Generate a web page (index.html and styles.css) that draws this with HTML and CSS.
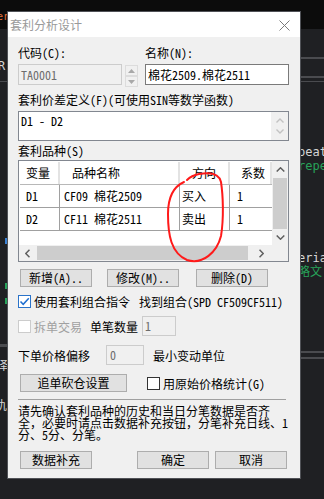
FILE: index.html
```html
<!DOCTYPE html>
<html lang="zh-CN">
<head>
    <meta charset="UTF-8">
    <meta name="viewport" content="width=device-width, initial-scale=1.0">
    <title>套利分析设计</title>
    <link rel="stylesheet" href="styles.css">
</head>
<body>
    <div class="desktop">
        <div class="editor-top"></div>

        <!-- editor text showing behind the dialog -->
        <span class="frag frag-er">er</span>
        <span class="frag frag-r">R</span>
        <span class="frag frag-peat">peat</span>
        <span class="frag frag-repe">repe</span>
        <span class="frag frag-eria">eria</span>
        <span class="frag frag-lue">略文</span>
        <span class="frag frag-yi">译</span>
        <span class="frag frag-qiu">犰</span>
        <span class="mark mark-blue"></span>
        <span class="mark mark-green1"></span>
        <span class="mark mark-green2"></span>
        <span class="rule rule-r1"></span>
        <span class="rule rule-r2"></span>
        <span class="rule rule-r3"></span>
        <span class="rule rule-l1"></span>
        <span class="rule rule-r4"></span>
        <span class="rule rule-r5"></span>
        <span class="rule rule-l2"></span>

        <div class="dialog">
            <div class="titlebar">
                <span class="title">套利分析设计</span>
                <svg class="close" width="11" height="11" viewBox="0 0 11 11">
                    <path d="M0.5 0.5 L10.5 10.5 M10.5 0.5 L0.5 10.5" stroke="#7a7a7a" stroke-width="1" fill="none"/>
                </svg>
            </div>

            <div class="content">
                <!-- code and name -->
                <div class="two-col">
                    <div class="label">代码(C):</div>
                    <div class="label">名称(N):</div>
                    <div class="code-field">
                        <div class="input input-disabled code-input">TA0001</div>
                        <div class="spin">
                            <div class="spin-btn">
                                <svg width="7" height="4" viewBox="0 0 7 4"><path d="M0 4 L3.5 0 L7 4 Z" fill="#a8a8a8"/></svg>
                            </div>
                            <div class="spin-btn">
                                <svg width="7" height="4" viewBox="0 0 7 4"><path d="M0 0 L3.5 4 L7 0 Z" fill="#a8a8a8"/></svg>
                            </div>
                        </div>
                    </div>
                    <div class="input name-input">棉花2509.棉花2511</div>
                </div>

                <!-- spread formula -->
                <div class="label label-formula">套利价差定义(F)(可使用SIN等数学函数)</div>
                <div class="textarea">
                    <div class="textarea-text">D1 - D2</div>
                    <div class="textarea-scroll">
                        <svg width="8" height="5" viewBox="0 0 8 5"><path d="M0.5 4.5 L4 1 L7.5 4.5" stroke="#c2c2c2" stroke-width="1.4" fill="none"/></svg>
                        <svg width="8" height="5" viewBox="0 0 8 5"><path d="M0.5 0.5 L4 4 L7.5 0.5" stroke="#c2c2c2" stroke-width="1.4" fill="none"/></svg>
                    </div>
                </div>

                <!-- legs list -->
                <div class="label label-legs">套利品种(S)</div>
                <div class="listbox">
                    <div class="list-area">
                        <div class="list-row list-head">
                            <div class="cell c1 h1">变量</div>
                            <div class="cell c2 h2">品种名称</div>
                            <div class="cell c3 h3">方向</div>
                            <div class="cell c4 h4">系数</div>
                        </div>
                        <div class="list-row">
                            <div class="cell c1">D1</div>
                            <div class="cell c2">CF09 棉花2509</div>
                            <div class="cell c3">买入</div>
                            <div class="cell c4">1</div>
                        </div>
                        <div class="list-row">
                            <div class="cell c1">D2</div>
                            <div class="cell c2">CF11 棉花2511</div>
                            <div class="cell c3">卖出</div>
                            <div class="cell c4">1</div>
                        </div>
                    </div>
                    <div class="vscroll">
                        <div class="arrow-btn">
                            <svg width="9" height="5" viewBox="0 0 9 5"><path d="M0.7 4.5 L4.5 0.8 L8.3 4.5" stroke="#606060" stroke-width="1.5" fill="none"/></svg>
                        </div>
                        <div class="vthumb"></div>
                        <div class="arrow-btn arrow-down">
                            <svg width="9" height="5" viewBox="0 0 9 5"><path d="M0.7 0.5 L4.5 4.2 L8.3 0.5" stroke="#606060" stroke-width="1.5" fill="none"/></svg>
                        </div>
                    </div>
                    <div class="hscroll">
                        <div class="arrow-btn arrow-h">
                            <svg width="5" height="9" viewBox="0 0 5 9"><path d="M4.5 0.7 L0.8 4.5 L4.5 8.3" stroke="#606060" stroke-width="1.5" fill="none"/></svg>
                        </div>
                        <div class="hthumb"></div>
                        <div class="arrow-btn arrow-h arrow-right">
                            <svg width="5" height="9" viewBox="0 0 5 9"><path d="M0.5 0.7 L4.2 4.5 L0.5 8.3" stroke="#606060" stroke-width="1.5" fill="none"/></svg>
                        </div>
                    </div>
                    <div class="corner"></div>

                    <!-- red hand-drawn mark over the direction column -->
                    <svg class="scribble" width="324" height="499" viewBox="0 0 324 499">
                        <path d="M184 179 C175 183 168 193 168 211 C168 232 171 250 187 257 C203 262 217 249 221 233 C224 215 223 192 221 179 C219 170 210 169 199 171 C194 172 190 174 187 177" stroke="#ff1a1a" stroke-width="2" fill="none" stroke-linecap="round"/>
                    </svg>
                </div>

                <!-- list buttons -->
                <div class="button-row">
                    <div class="btn btn-add">新增(A)..</div>
                    <div class="btn btn-edit">修改(M)..</div>
                    <div class="btn btn-del">删除(D)</div>
                </div>

                <div class="check-row">
                    <span class="checkbox checkbox-on">
                        <svg width="11" height="11" viewBox="0 0 11 11"><path d="M1.5 5.5 L4.2 8.3 L9.8 2.2" stroke="#1f6fd0" stroke-width="1.5" fill="none"/></svg>
                    </span>
                    <span class="check-text">使用套利组合指令</span>
                    <span class="found-text">找到组合(SPD CF509CF511)</span>
                </div>

                <div class="split-row">
                    <span class="checkbox checkbox-off"></span>
                    <span class="check-text muted">拆单交易</span>
                    <span class="qty-label">单笔数量</span>
                    <div class="input input-disabled qty-input">1</div>
                </div>

                <div class="offset-row">
                    <span class="offset-label">下单价格偏移</span>
                    <div class="input input-disabled offset-input">0</div>
                    <span class="tick-label">最小变动单位</span>
                </div>

                <div class="chase-row">
                    <div class="btn btn-chase">追单砍仓设置</div>
                    <span class="checkbox checkbox-plain"></span>
                    <span class="check-text">用原始价格统计(G)</span>
                </div>

                <div class="separator"></div>

                <div class="note">请先确认套利品种的历史和当日分笔数据是否齐<br>全，必要时请点击数据补充按钮，分笔补充日线、1<br>分、5分、分笔。</div>

                <div class="footer">
                    <div class="btn">数据补充</div>
                    <div class="footer-right">
                        <div class="btn">确定</div>
                        <div class="btn">取消</div>
                    </div>
                </div>
            </div>
        </div>
    </div>
</body>
</html>
```

FILE: styles.css
```css
body {
    margin: 0;
    background-color: #1f2023;
    font-family: "Noto Sans Mono CJK SC", "Noto Sans CJK SC", sans-serif;
    font-size: 12px;
    color: #000;
}

.desktop {
    position: relative;
    width: 324px;
    height: 499px;
    overflow: hidden;
}

/* Editor behind the dialog */
.editor-top {
    height: 29px;
    background-color: #0c0c0c;
}

.frag {
    position: absolute;
    font-family: "DejaVu Sans Mono", "Noto Sans CJK SC", monospace;
    font-size: 12px;
    line-height: 12px;
    color: #d6d6d6;
    white-space: nowrap;
}

.frag-er { left: -3px; top: 11px; font-size: 10px; color: #e2703a; }
.frag-r { left: -2px; top: 60px; }
.frag-peat { left: 298px; top: 146px; }
.frag-repe { left: 298px; top: 160px; color: #27a35a; }
.frag-eria { left: 298px; top: 252px; }
.frag-lue { left: 298px; top: 266px; color: #27a35a; }
.frag-yi { left: -4px; top: 360px; }
.frag-qiu { left: -5px; top: 400px; }

.mark {
    position: absolute;
    left: 5px;
    width: 2px;
    height: 6px;
}

.mark-blue { top: 238px; background-color: #3b82d6; }
.mark-green1 { top: 283px; background-color: #27a35a; }
.mark-green2 { top: 298px; background-color: #27a35a; }

.rule {
    position: absolute;
    height: 2px;
    background-color: #4a4b4f;
}

.rule-r1 { left: 300px; width: 24px; top: 57px; }
.rule-r2 { left: 300px; width: 24px; top: 76px; }
.rule-r3 { left: 300px; width: 24px; top: 81px; height: 1px; }
.rule-l1 { left: 0; width: 8px; top: 81px; height: 1px; }
.rule-r4 { left: 300px; width: 24px; top: 351px; }
.rule-r5 { left: 300px; width: 24px; top: 357px; }
.rule-l2 { left: 0; width: 8px; top: 344px; height: 3px; }

/* Dialog window */
.dialog {
    position: absolute;
    left: 7px;
    top: 11px;
    z-index: 2;
    width: 294px;
    height: 468px;
    box-sizing: border-box;
    border: 1px solid #505257;
    background-color: #f0f0f0;
}

.titlebar {
    height: 25px;
    background-color: #fff;
    display: flex;
    align-items: center;
    justify-content: space-between;
    padding: 0 10px 0 2px;
}

.title {
    color: #9a9a9a;
    font-family: "Noto Sans CJK SC", sans-serif;
    font-size: 12px;
}

.close {
    display: block;
    margin-top: 1px;
}

.content {
    padding: 9px 11px 0 10px;
}

.label {
    line-height: 14px;
    height: 14px;
    white-space: nowrap;
}

/* Inputs */
.input {
    box-sizing: border-box;
    height: 21px;
    line-height: 19px;
    border: 1px solid #7a7a7a;
    background-color: #fff;
    padding-left: 2px;
    white-space: nowrap;
}

.input-disabled {
    border-color: #cccccc;
    background-color: #f0f0f0;
    color: #6d6d6d;
}

.two-col {
    display: grid;
    grid-template-columns: 120px 1fr;
    column-gap: 7px;
    row-gap: 4px;
}

.code-field {
    display: flex;
    gap: 3px;
}

.code-input {
    width: 104px;
}

.spin {
    width: 13px;
    display: flex;
    flex-direction: column;
    justify-content: space-between;
    padding: 1px 0;
}

.spin-btn {
    height: 9px;
    border: 1px solid #dcdcdc;
    display: flex;
    align-items: center;
    justify-content: center;
}

.label-formula {
    margin-top: 5px;
}

.textarea {
    margin-top: 4px;
    height: 30px;
    box-sizing: border-box;
    border: 1px solid #828790;
    background-color: #fff;
    display: flex;
}

.textarea-text {
    flex: 1;
    padding: 2px 0 0 2px;
    line-height: 14px;
}

.textarea-scroll {
    width: 17px;
    background-color: #f0f0f0;
    display: flex;
    flex-direction: column;
    align-items: center;
    justify-content: space-between;
    padding: 6px 0 6px;
}

/* Legs list */
.label-legs {
    margin-top: 3px;
}

.listbox {
    position: relative;
    margin-top: 2px;
    height: 102px;
    box-sizing: border-box;
    border: 1px solid #828790;
    background-color: #fff;
    display: grid;
    grid-template-columns: 1fr 16px;
    grid-template-rows: 1fr 16px;
}

.list-area {
    padding: 1px 0 0 1px;
    overflow: hidden;
}

.list-row {
    display: flex;
    height: 22px;
    border-bottom: 1px solid #a0a0a0;
}

.list-head {
    border-bottom-color: #b8b8b8;
}

.cell {
    box-sizing: border-box;
    height: 22px;
    line-height: 22px;
    border-right: 1px solid #a0a0a0;
    white-space: nowrap;
}

.list-head .cell {
    border-right: 2px solid #e3e3e3;
}

.c1 { width: 40px; padding-left: 6px; }
.c2 { width: 120px; padding-left: 4px; }
.c3 { width: 50px; padding-left: 2px; }
.c4 { width: 42px; padding-left: 7px; border-right: none; }

.h2 { padding-left: 12px; }
.h3 { padding-left: 12px; }
.h4 { padding-left: 11px; }

.vscroll {
    background-color: #f0f0f0;
    display: flex;
    flex-direction: column;
}

.arrow-btn {
    height: 17px;
    display: flex;
    align-items: center;
    justify-content: center;
}

.arrow-down {
    margin-top: auto;
    height: 16px;
}

.vthumb {
    height: 51px;
    margin: 0 1px;
    background-color: #cdcdcd;
}

.hscroll {
    background-color: #f0f0f0;
    display: flex;
}

.arrow-h {
    height: 16px;
    width: 17px;
}

.arrow-right {
    margin-left: auto;
    width: 22px;
}

.hthumb {
    width: 211px;
    margin: 1px 0 1px 1px;
    background-color: #cdcdcd;
}

.corner {
    background-color: #f0f0f0;
}

.scribble {
    position: absolute;
    left: -19px;
    top: -158px;
    pointer-events: none;
}

/* Buttons */
.btn {
    box-sizing: border-box;
    height: 18px;
    width: 72px;
    line-height: 16px;
    border: 1px solid #adadad;
    background-color: #e1e1e1;
    text-align: center;
    white-space: nowrap;
}

.button-row {
    margin-top: 7px;
    display: flex;
    padding-left: 2px;
}

.btn-edit { margin-left: 15px; }
.btn-del { margin-left: 17px; }

/* Checkbox rows */
.checkbox {
    box-sizing: border-box;
    width: 13px;
    height: 13px;
    border: 1px solid #333;
    background-color: #fff;
    display: inline-flex;
    align-items: center;
    justify-content: center;
    flex-shrink: 0;
}

.checkbox-on {
    border-color: #2a73c9;
}

.checkbox-off {
    border-color: #cccccc;
}

.check-row,
.split-row,
.offset-row,
.chase-row {
    display: flex;
    align-items: center;
    white-space: nowrap;
}

.check-row {
    margin-top: 7px;
    height: 14px;
}

.check-text {
    margin-left: 3px;
}

.muted {
    color: #a0a0a0;
}

.found-text {
    margin-left: 9px;
}

.split-row {
    margin-top: 8px;
    height: 20px;
}

.qty-label {
    margin-left: 8px;
}

.qty-input {
    margin-left: 4px;
    width: 34px;
    height: 20px;
    line-height: 18px;
}

.offset-row {
    margin-top: 9px;
    height: 20px;
}

.offset-input {
    margin-left: 16px;
    width: 38px;
    height: 20px;
    line-height: 18px;
    padding-left: 3px;
}

.tick-label {
    margin-left: 9px;
}

.chase-row {
    margin-top: 9px;
    height: 18px;
    padding-left: 2px;
}

.btn-chase {
    width: 107px;
}

.checkbox-plain {
    margin-left: 20px;
}

.separator {
    margin-top: 7px;
    height: 1px;
    margin-right: 3px;
    background-color: #a0a0a0;
}

.note {
    margin-top: 5px;
    line-height: 12px;
    white-space: nowrap;
}

.footer {
    margin-top: 10px;
    display: flex;
    justify-content: space-between;
    padding: 0 2px 0 2px;
}

.footer-right {
    display: flex;
    gap: 6px;
}
```
